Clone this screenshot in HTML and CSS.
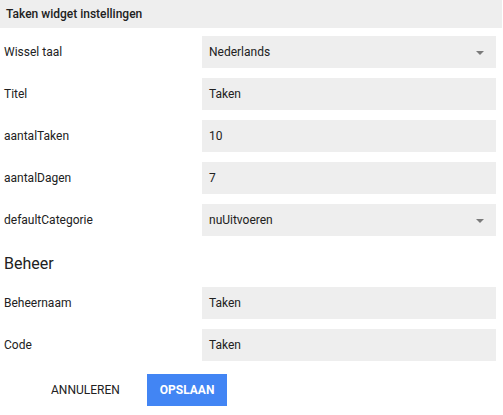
FILE: index.html
```html
<!DOCTYPE html>
<html lang="nl">
<head>
<meta charset="utf-8">
<title>Taken widget instellingen</title>
<link rel="stylesheet" href="styles.css">
</head>
<body>
<div class="dialog">
  <div class="header">Taken widget instellingen</div>
  <div class="form">
    <div class="row">
      <div class="label">Wissel taal</div>
      <div class="field select"><span>Nederlands</span><span class="arrow"></span></div>
    </div>
    <div class="row">
      <div class="label">Titel</div>
      <div class="field"><span>Taken</span></div>
    </div>
    <div class="row">
      <div class="label">aantalTaken</div>
      <div class="field"><span>10</span></div>
    </div>
    <div class="row">
      <div class="label">aantalDagen</div>
      <div class="field"><span>7</span></div>
    </div>
    <div class="row">
      <div class="label">defaultCategorie</div>
      <div class="field select"><span>nuUitvoeren</span><span class="arrow"></span></div>
    </div>
    <h2 class="section">Beheer</h2>
    <div class="row">
      <div class="label">Beheernaam</div>
      <div class="field"><span>Taken</span></div>
    </div>
    <div class="row">
      <div class="label">Code</div>
      <div class="field"><span>Taken</span></div>
    </div>
  </div>
  <div class="actions">
    <button class="btn flat">ANNULEREN</button>
    <button class="btn raised">OPSLAAN</button>
  </div>
</div>
</body>
</html>
```
FILE: styles.css
```css
html, body {
  margin: 0;
  padding: 0;
  background: #ffffff;
}
body {
  font-family: Roboto, "Liberation Sans", Arial, sans-serif;
  font-size: 12px;
  color: #212121;
}
.dialog {
  width: 503px;
}
.header {
  width: 496px;
  height: 28px;
  line-height: 28px;
  padding-left: 6px;
  background: #eeeeee;
  font-weight: 500;
  color: #212121;
}
.form {
  padding: 8px 7px 0 4px;
  display: flex;
  flex-direction: column;
  gap: 10px;
}
.row {
  display: grid;
  grid-template-columns: 198px 294px;
  align-items: center;
}
.label {
  color: #212121;
}
.field {
  height: 32px;
  background: #eeeeee;
  display: flex;
  align-items: center;
  justify-content: space-between;
  padding: 0 12px 0 7px;
  color: #212121;
}
.arrow {
  width: 0;
  height: 0;
  border-left: 4px solid transparent;
  border-right: 4px solid transparent;
  border-top: 4px solid #7a7a7a;
  margin-top: 1px;
}
.section {
  margin: 8px 0 3px 0;
  font-size: 16px;
  font-weight: 400;
  line-height: 20px;
  color: #212121;
}
.actions {
  display: flex;
  align-items: center;
  gap: 14px;
  padding: 13px 0 0 38px;
}
.btn {
  font-family: Roboto, "Liberation Sans", Arial, sans-serif;
  font-size: 12px;
  font-weight: 500;
  height: 32px;
  padding: 0 13px;
  border: 0;
  border-radius: 0;
  background: transparent;
  cursor: pointer;
}
.flat {
  color: #212121;
  font-weight: 400;
}
.raised {
  background: #4285f4;
  color: #ffffff;
  font-weight: 700;
  width: 80px;
  box-shadow: 0 1px 0 #2a5db5;
}
```
